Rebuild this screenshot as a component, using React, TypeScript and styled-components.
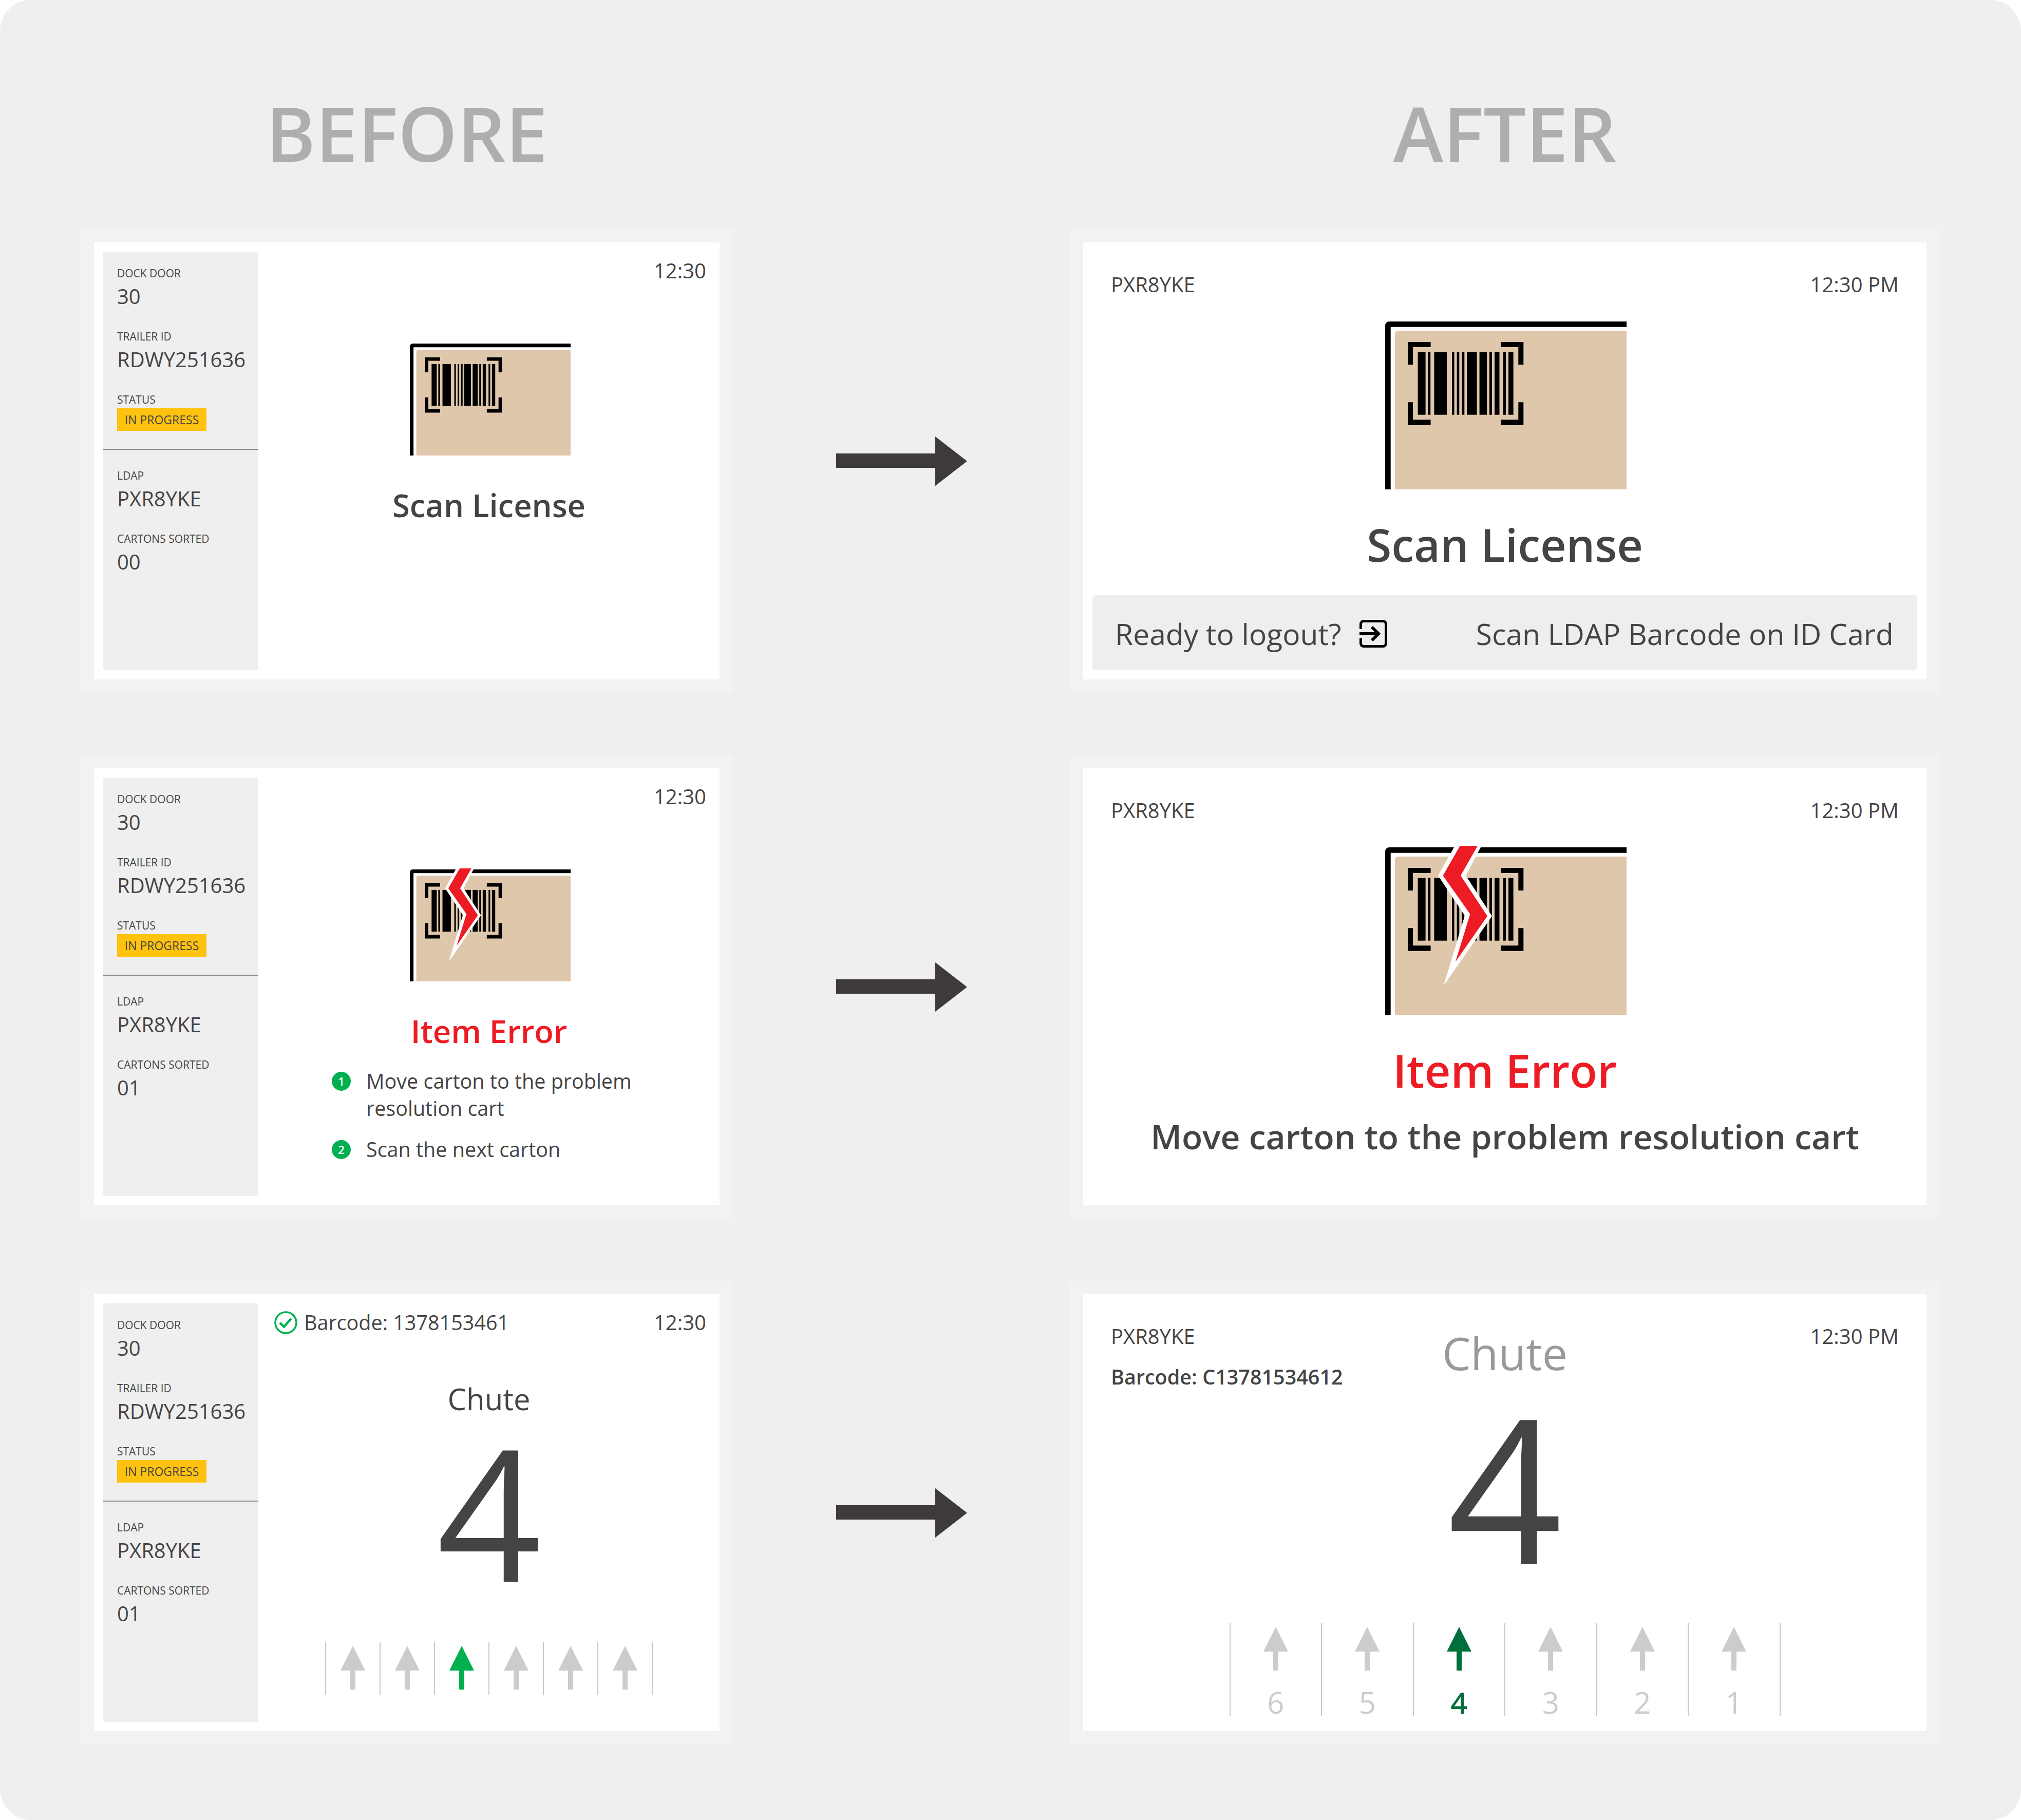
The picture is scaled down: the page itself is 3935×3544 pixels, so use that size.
import React from 'react';
import styled, { createGlobalStyle } from 'styled-components';

const COLUMNS = '1218px 708px 1642px';

const GlobalStyle = createGlobalStyle`
  html, body {
    margin: 0;
    padding: 0;
    background: #fff;
  }
`;

const Page = styled.div`
  width: 3935px;
  height: 3544px;
  box-sizing: border-box;
  padding: 0 184px 0 183px;
  background: #efefef;
  border-radius: 60px;
  font-family: 'Open Sans', sans-serif;
  color: #444;
`;

const HeadRow = styled.div`
  display: grid;
  grid-template-columns: ${COLUMNS};
  height: 472px;
`;

const Heading = styled.h2`
  margin: 0;
  padding-top: 142px;
  font-size: 147px;
  line-height: 232px;
  font-weight: 600;
  color: #aeaeae;
  text-align: center;
`;

const Rows = styled.div`
  display: flex;
  flex-direction: column;
  gap: 173px;
`;

const Row = styled.div`
  display: grid;
  grid-template-columns: ${COLUMNS};
  height: 851px;
  flex: none;
`;

const Card = styled.div`
  background: #fff;
  box-shadow: 0 0 0 26px #f2f2f2;
  display: flex;
  min-height: 0;
`;

const Sidebar = styled.aside`
  width: 302px;
  margin: 18px 0 18px 18px;
  background: #efefef;
  border-radius: 3px;
  flex: none;
  display: flex;
  flex-direction: column;
`;

const SideGroup = styled.div<{ $divided?: boolean }>`
  padding: ${p => (p.$divided ? '28px' : '36px')} 0 0 27px;
  height: ${p => (p.$divided ? '386px' : 'auto')};
  box-sizing: border-box;
  border-bottom: ${p => (p.$divided ? '2px solid #8c8c8c' : 'none')};
`;

const Field = styled.div`
  height: 123px;
`;

const Label = styled.div`
  font-size: 21px;
  line-height: 28px;
  color: #444;
  text-transform: uppercase;
`;

const Value = styled.div`
  font-size: 40px;
  line-height: 52px;
  margin-top: 5px;
  color: #444;
`;

const Badge = styled.div`
  margin-top: 3px;
  width: 174px;
  height: 44px;
  line-height: 44px;
  background: #ffc20e;
  text-align: center;
  font-size: 23px;
  color: #444;
`;

const Main = styled.div`
  flex: 1;
  min-width: 0;
  display: flex;
  flex-direction: column;
  align-items: center;
`;

const MainBar = styled.div`
  align-self: stretch;
  display: flex;
  justify-content: space-between;
  align-items: center;
  padding: 26px 26px 0 31px;
  height: 58px;
  font-size: 40px;
  line-height: 58px;
  color: #444;
`;

const Spacer = styled.span``;

const BarcodeNote = styled.div`
  display: flex;
  align-items: center;
  gap: 13px;
  font-size: 39.500px;
`;

const ScanArt = styled.svg<{ $large?: boolean }>`
  display: block;
  overflow: visible;
  width: ${p => (p.$large ? '470px' : '313px')};
  height: ${p => (p.$large ? '327px' : '218px')};
`;

const ArtSlot = styled.div<{ $large?: boolean }>`
  margin: ${p => (p.$large ? '44px' : '113px')} 0 0 4px;
`;

const Title = styled.h3<{ $error?: boolean; $large?: boolean }>`
  margin: ${p => (p.$large ? '47px' : '52px')} 0 0;
  font-size: ${p => (p.$large ? '88px' : '61.500px')};
  line-height: ${p => (p.$large ? '120px' : '88px')};
  font-weight: 600;
  color: ${p => (p.$error ? '#ed1c24' : '#444')};
  text-align: center;
`;

const Steps = styled.ol`
  list-style: none;
  margin: 28px 0 0 143px;
  padding: 0;
  width: 656px;
  align-self: flex-start;
  display: flex;
  flex-direction: column;
  gap: 27px;
`;

const Step = styled.li`
  display: flex;
  gap: 30px;
  font-size: 39.500px;
  line-height: 53px;
`;

const StepDot = styled.span`
  flex: none;
  width: 37px;
  height: 37px;
  margin-top: 8px;
  border-radius: 50%;
  background: #00b050;
  color: #fff;
  font-size: 22px;
  line-height: 37px;
  font-weight: 600;
  text-align: center;
`;

const ChuteLabel = styled.div`
  margin-top: 80px;
  font-size: 58px;
  line-height: 80px;
  color: #444;
`;

const BigDigit = styled.div<{ $large?: boolean }>`
  margin-top: ${p => (p.$large ? '26px' : '28px')};
  font-size: ${p => (p.$large ? '391px' : '356px')};
  line-height: ${p => (p.$large ? '320px' : '300px')};
  color: #444;
  text-align: center;
`;

const ArrowStrip = styled.div<{ $large?: boolean }>`
  display: flex;
  flex: none;
  margin-top: 105px;
  border-left: 2px solid #c8c8c8;
  height: ${p => (p.$large ? '181px' : '103px')};
`;

const ArrowCell = styled.div<{ $large?: boolean }>`
  box-sizing: border-box;
  width: ${p => (p.$large ? '178.500px' : '106px')};
  border-right: 2px solid #c8c8c8;
  display: flex;
  flex-direction: column;
  align-items: center;
  padding-top: 8px;
`;

const CellNumber = styled.div<{ $active?: boolean }>`
  margin-top: 46px;
  font-size: 58px;
  line-height: 32px;
  font-weight: ${p => (p.$active ? 600 : 400)};
  color: ${p => (p.$active ? '#006f3c' : '#ccc')};
`;

const AfterBody = styled.div`
  flex: 1;
  min-width: 0;
  display: flex;
  flex-direction: column;
  align-items: center;
`;

const TopBar = styled.div`
  align-self: stretch;
  display: flex;
  justify-content: space-between;
  padding: 54px 54px 0;
  font-size: 40px;
  line-height: 56px;
  color: #444;
`;

const ChuteBar = styled.div`
  align-self: stretch;
  display: grid;
  grid-template-columns: 1fr auto 1fr;
  padding: 54px 54px 0;
  font-size: 40px;
  line-height: 56px;
  color: #444;
`;

const ChuteBarRight = styled.div`
  justify-self: end;
`;

const SubNote = styled.div`
  margin-top: 23px;
  font-size: 39.500px;
  font-weight: 600;
`;

const AfterChute = styled.div`
  margin-top: -2px;
  font-size: 88px;
  line-height: 124px;
  color: #999;
`;

const MoveNote = styled.div`
  margin-top: 20px;
  font-size: 66px;
  line-height: 96px;
  font-weight: 600;
  color: #444;
`;

const Footer = styled.div`
  align-self: stretch;
  margin: auto 18px 18px;
  height: 146px;
  flex: none;
  background: #eee;
  border-radius: 6px;
  box-sizing: border-box;
  padding: 4px 46px 0 44px;
  display: flex;
  align-items: center;
  justify-content: space-between;
  font-size: 57px;
  color: #444;
`;

const LogoutGroup = styled.div`
  display: flex;
  align-items: center;
  gap: 36px;
`;

const ArrowGap = styled.div`
  display: flex;
  align-items: center;
  justify-content: center;
`;

const BAR_RUNS: [number, number][] = [
  [63.6, 15], [83.2, 5], [95.4, 24.6], [130, 4.6], [139.6, 4.7], [149.3, 5],
  [159, 19.6], [183.6, 14.6], [203, 5], [213, 9.5], [230, 5], [240, 9.6],
];

const ScanImage = ({ large, broken }: { large?: boolean; broken?: boolean }) => (
  <ScanArt $large={large} viewBox="0 0 470 327">
    <path d="M0 327V8a8 8 0 0 1 8-8H470V10.700H10.700V327Z" fill="#000" />
    <path d="M19 327V24a6 6 0 0 1 6-6H470V327Z" fill="#dfc7ab" />
    <path d="M44 84V40H88.600V50H54V84Z" fill="#000" />
    <path d="M225 40H269.300V84H259.300V50H225Z" fill="#000" />
    <path d="M44 157.300H54V191.300H88.600V201.700H44Z" fill="#000" />
    <path d="M259.300 157.300H269.300V201.700H225V191.300H259.300Z" fill="#000" />
    {BAR_RUNS.map(([x, w]) => (
      <rect key={x} x={x} y={59.7} width={w} height={122} fill="#000" />
    ))}
    {broken && (
      <>
        <polygon points="135.7,-3 187.5,-3 157,55 208,134 114,269 155,133 103,55" fill="#fff" />
        <polygon points="145.7,-3 180,-3 147,55 199,134 136.8,223 165.4,130 112.5,55" fill="#ed1c24" />
      </>
    )}
  </ScanArt>
);

const TransitionArrow = () => (
  <svg width="255" height="96" viewBox="0 0 255 96">
    <path d="M0 33H193V0L255 48L193 96V61H0Z" fill="#3f3a3a" />
  </svg>
);

const LogoutIcon = () => (
  <svg width="54" height="54" viewBox="0 0 54 54" fill="none" stroke="#000">
    <path strokeWidth="5" d="M2.500 18V8a5.500 5.500 0 0 1 5.500-5.500H46a5.500 5.500 0 0 1 5.500 5.500V46a5.500 5.500 0 0 1-5.500 5.500H8a5.500 5.500 0 0 1-5.500-5.500V36" />
    <path strokeWidth="6" d="M0 27H36M24 14L37 27L24 40" />
  </svg>
);

const CheckIcon = () => (
  <svg width="45" height="45" viewBox="0 0 45 45" fill="none" stroke="#00b050">
    <circle cx="22.500" cy="22.500" r="20.500" strokeWidth="3.500" />
    <path d="M11 23L19 30.500L33 14.500" strokeWidth="4.500" />
  </svg>
);

const UpArrow = ({ color }: { color: string }) => (
  <svg width="48" height="85" viewBox="0 0 48 85">
    <path d="M24 0L48 48H29V85H19V48H0Z" fill={color} />
  </svg>
);

const InfoPanel = ({ cartons }: { cartons: string }) => (
  <Sidebar>
    <SideGroup $divided>
      <Field>
        <Label>Dock Door</Label>
        <Value>30</Value>
      </Field>
      <Field>
        <Label>Trailer ID</Label>
        <Value>RDWY251636</Value>
      </Field>
      <Field>
        <Label>Status</Label>
        <Badge>IN PROGRESS</Badge>
      </Field>
    </SideGroup>
    <SideGroup>
      <Field>
        <Label>LDAP</Label>
        <Value>PXR8YKE</Value>
      </Field>
      <Field>
        <Label>Cartons Sorted</Label>
        <Value>{cartons}</Value>
      </Field>
    </SideGroup>
  </Sidebar>
);

const CHUTES = [6, 5, 4, 3, 2, 1];

const App = () => (
  <Page>
    <GlobalStyle />
    <HeadRow>
      <Heading>BEFORE</Heading>
      <div />
      <Heading>AFTER</Heading>
    </HeadRow>
    <Rows>
      <Row>
        <Card>
          <InfoPanel cartons="00" />
          <Main>
            <MainBar><Spacer /><span>12:30</span></MainBar>
            <ArtSlot><ScanImage /></ArtSlot>
            <Title>Scan License</Title>
          </Main>
        </Card>
        <ArrowGap><TransitionArrow /></ArrowGap>
        <Card>
          <AfterBody>
            <TopBar><span>PXR8YKE</span><span>12:30 PM</span></TopBar>
            <ArtSlot $large><ScanImage large /></ArtSlot>
            <Title $large>Scan License</Title>
            <Footer>
              <LogoutGroup>Ready to logout? <LogoutIcon /></LogoutGroup>
              <span>Scan LDAP Barcode on ID Card</span>
            </Footer>
          </AfterBody>
        </Card>
      </Row>
      <Row>
        <Card>
          <InfoPanel cartons="01" />
          <Main>
            <MainBar><Spacer /><span>12:30</span></MainBar>
            <ArtSlot><ScanImage broken /></ArtSlot>
            <Title $error>Item Error</Title>
            <Steps>
              <Step><StepDot>1</StepDot><span>Move carton to the problem<br />resolution cart</span></Step>
              <Step><StepDot>2</StepDot><span>Scan the next carton</span></Step>
            </Steps>
          </Main>
        </Card>
        <ArrowGap><TransitionArrow /></ArrowGap>
        <Card>
          <AfterBody>
            <TopBar><span>PXR8YKE</span><span>12:30 PM</span></TopBar>
            <ArtSlot $large><ScanImage large broken /></ArtSlot>
            <Title $large $error>Item Error</Title>
            <MoveNote>Move carton to the problem resolution cart</MoveNote>
          </AfterBody>
        </Card>
      </Row>
      <Row>
        <Card>
          <InfoPanel cartons="01" />
          <Main>
            <MainBar>
              <BarcodeNote><CheckIcon />Barcode: 1378153461</BarcodeNote>
              <span>12:30</span>
            </MainBar>
            <ChuteLabel>Chute</ChuteLabel>
            <BigDigit>4</BigDigit>
            <ArrowStrip>
              {CHUTES.map(n => (
                <ArrowCell key={n}>
                  <UpArrow color={n === 4 ? '#00b050' : '#ccc'} />
                </ArrowCell>
              ))}
            </ArrowStrip>
          </Main>
        </Card>
        <ArrowGap><TransitionArrow /></ArrowGap>
        <Card>
          <AfterBody>
            <ChuteBar>
              <div>
                <div>PXR8YKE</div>
                <SubNote>Barcode: C13781534612</SubNote>
              </div>
              <AfterChute>Chute</AfterChute>
              <ChuteBarRight>12:30 PM</ChuteBarRight>
            </ChuteBar>
            <BigDigit $large>4</BigDigit>
            <ArrowStrip $large>
              {CHUTES.map(n => (
                <ArrowCell key={n} $large>
                  <UpArrow color={n === 4 ? '#006f3c' : '#ccc'} />
                  <CellNumber $active={n === 4}>{n}</CellNumber>
                </ArrowCell>
              ))}
            </ArrowStrip>
          </AfterBody>
        </Card>
      </Row>
    </Rows>
  </Page>
);

export default App;
